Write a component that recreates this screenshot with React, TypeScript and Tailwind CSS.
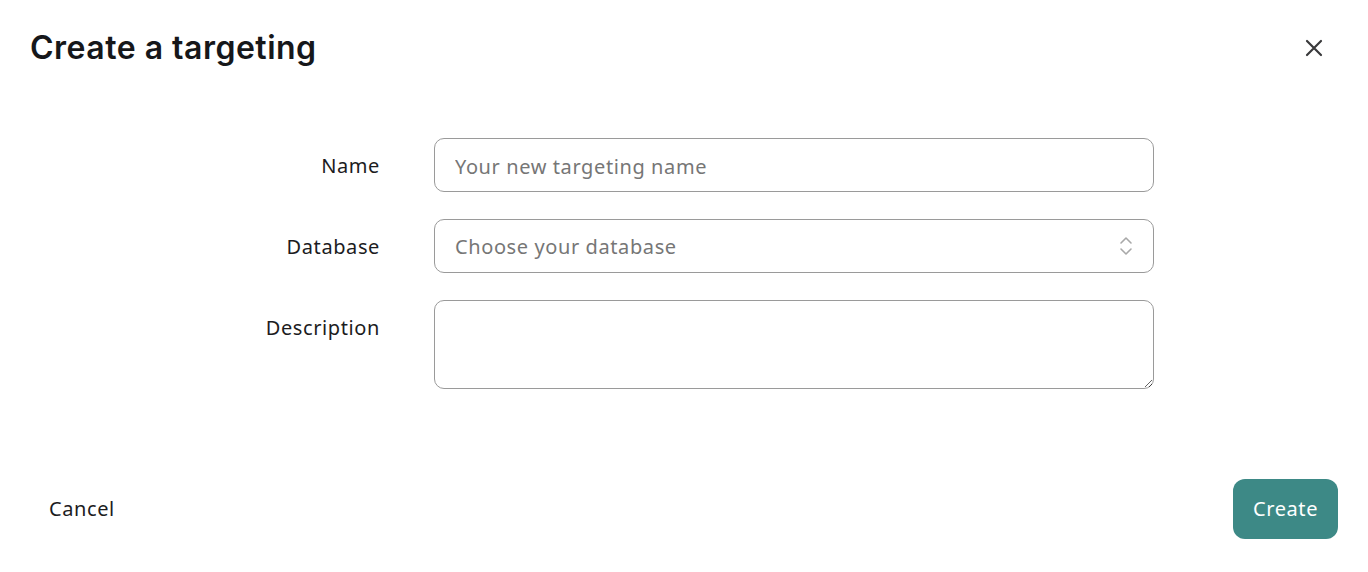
import React from "react";

const body = { fontFamily: '"Noto Sans", "Open Sans", sans-serif' };

/**
 * Create targeting dialog
 */
const App: React.FC = () => {
  return (
    <div className="min-h-[572px] w-full flex flex-col bg-white text-[#1c1c1e] tracking-[0.6px]" style={body}>
      {/* Header */}
      <div className="flex items-center justify-between pl-[30px] pr-[42px] pt-7">
        <h1
          className="text-[32px] leading-10 font-semibold tracking-[0.5px] text-[#16171a]"
          style={{ fontFamily: 'Inter, "Noto Sans", sans-serif' }}
        >
          Create a targeting
        </h1>
        <button className="w-6 h-6 flex items-center justify-center text-[#3a3a3c]">
          <svg width="18" height="18" viewBox="0 0 18 18" fill="none" stroke="currentColor" strokeWidth="2.2" strokeLinecap="round">
            <path d="M2 2 16 16M16 2 2 16" />
          </svg>
        </button>
      </div>

      {/* Form */}
      <div className="mt-[70px] pl-[180px] flex flex-col gap-[27px]">
        <div className="flex items-start">
          <label className="w-[200px] h-[54px] pt-0.5 flex items-center justify-end text-xl">Name</label>
          <input
            placeholder="Your new targeting name"
            className="ml-[54px] w-[720px] h-[54px] rounded-[10px] border border-[#9a9a9a] px-5 pt-0.5 text-xl tracking-[0.6px] outline-none placeholder:text-[#767676]"
          />
        </div>
        <div className="flex items-start">
          <label className="w-[200px] h-[54px] pt-0.5 flex items-center justify-end text-xl">Database</label>
          <div className="ml-[54px] w-[720px] h-[54px] rounded-[10px] border border-[#9a9a9a] pl-5 pr-[19px] flex items-center justify-between text-xl text-[#767676]">
            <span className="pt-0.5">Choose your database</span>
            <svg width="16" height="22" viewBox="0 0 16 22" fill="none" stroke="#a8a8a8" strokeWidth="1.6" strokeLinecap="round" strokeLinejoin="round">
              <path d="M3 8 8 3l5 5M3 14l5 5 5-5" />
            </svg>
          </div>
        </div>
        <div className="flex items-start">
          <label className="w-[200px] h-[54px] pt-0.5 flex items-center justify-end text-xl">Description</label>
          <textarea className="ml-[54px] w-[720px] h-[89px] rounded-[10px] border border-[#9a9a9a] px-5 py-3 text-xl outline-none resize-y" />
        </div>
      </div>

      <div className="flex-1" />

      {/* Footer */}
      <div className="flex items-center justify-between px-[30px] pb-[33px]">
        <button className="px-[19px] h-[60px] text-xl">Cancel</button>
        <button className="w-[105px] h-[60px] rounded-xl bg-[#3d8986] text-white text-xl">Create</button>
      </div>
    </div>
  );
};

export default App;
